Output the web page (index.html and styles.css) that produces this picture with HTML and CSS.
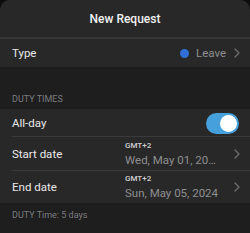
FILE: index.html
```html
<!DOCTYPE html>
<html>
<head>
<meta charset="utf-8">
<link rel="stylesheet" href="styles.css">
</head>
<body>
<div class="sheet">
  <div class="header">New Request</div>
  <div class="group">
    <div class="row">
      <span class="label">Type</span>
      <span class="type-value"><span class="dot"></span><span class="muted">Leave</span></span>
      <svg class="chev" width="6" height="10" viewBox="0 0 6 10"><polyline points="1,1 5,5 1,9" fill="none" stroke="#6e6e70" stroke-width="1.3" stroke-linecap="round" stroke-linejoin="round"/></svg>
    </div>
  </div>
  <div class="section-label">DUTY TIMES</div>
  <div class="group">
    <div class="row sep">
      <span class="label">All-day</span>
      <span class="toggle"><span class="knob"></span></span>
    </div>
    <div class="row date start sep">
      <span class="label">Start date</span>
      <span class="date-val"><span class="tz">GMT+2</span><span class="dt">Wed, May 01, 2024</span></span>
      <svg class="chev wide" width="6" height="10" viewBox="0 0 6 10"><polyline points="1,1 5,5 1,9" fill="none" stroke="#6e6e70" stroke-width="1.3" stroke-linecap="round" stroke-linejoin="round"/></svg>
    </div>
    <div class="row date end">
      <span class="label">End date</span>
      <span class="date-val"><span class="tz">GMT+2</span><span class="dt">Sun, May 05, 2024</span></span>
      <svg class="chev wide" width="6" height="10" viewBox="0 0 6 10"><polyline points="1,1 5,5 1,9" fill="none" stroke="#6e6e70" stroke-width="1.3" stroke-linecap="round" stroke-linejoin="round"/></svg>
    </div>
  </div>
  <div class="footer">DUTY Time: 5 days</div>
</div>
</body>
</html>
```
FILE: styles.css
```css
html, body {
  margin: 0;
  padding: 0;
  background: #0c0c0c;
}
body {
  font-family: Roboto, "Noto Sans", sans-serif;
  width: 250px;
  height: 233px;
  overflow: hidden;
}
.sheet {
  width: 250px;
  height: 233px;
  background: #1e1e1f;
  border-radius: 10px 10px 0 0;
  overflow: hidden;
}
.header {
  height: 37px;
  background: #282828;
  border-bottom: 2px solid #363636;
  display: flex;
  align-items: center;
  justify-content: center;
  color: #f0f0f0;
  font-size: 12px;
  font-weight: 500;
}
.group {
  background: #282828;
}
.row {
  position: relative;
  height: 28px;
  display: flex;
  align-items: center;
  padding: 0 10px 0 12px;
  color: #e8e8e8;
  font-size: 11.5px;
}
.row.sep::after {
  content: "";
  position: absolute;
  left: 12px;
  right: 0;
  bottom: 0;
  height: 1px;
  background: #3a3a3a;
}
.label {
  flex: 1;
}
.type-value {
  display: flex;
  align-items: center;
  gap: 7px;
  margin-right: 8px;
}
.dot {
  width: 9px;
  height: 9px;
  border-radius: 50%;
  background: #2f6fd6;
}
.muted {
  color: #8f8f91;
}
.chev {
  flex: none;
}
.chev.wide {
  margin-left: 15px;
}
.section-label {
  height: 42px;
  box-sizing: border-box;
  display: flex;
  align-items: flex-end;
  padding: 0 12px 4px;
  line-height: 12px;
  font-size: 9px;
  color: #7c7c7e;
}
.toggle {
  width: 33px;
  height: 21px;
  border-radius: 11px;
  background: #45a0dc;
  margin-right: 1px;
  display: flex;
  align-items: center;
  justify-content: flex-end;
  padding: 0 2px;
  box-sizing: border-box;
}
.knob {
  width: 17px;
  height: 17px;
  border-radius: 50%;
  background: #ffffff;
}
.row.start {
  height: 34px;
}
.row.end {
  height: 32px;
}
.date-val {
  width: 94px;
  flex: none;
  display: flex;
  flex-direction: column;
  gap: 2px;
}
.tz {
  font-size: 8px;
  line-height: 10px;
  font-weight: 500;
  color: #d0d0d0;
}
.dt {
  font-size: 11.5px;
  line-height: 14px;
  color: #8f8f91;
  white-space: nowrap;
  overflow: hidden;
  text-overflow: ellipsis;
}
.footer {
  padding: 6px 12px 0;
  font-size: 9px;
  line-height: 12px;
  color: #7c7c7e;
}
```
